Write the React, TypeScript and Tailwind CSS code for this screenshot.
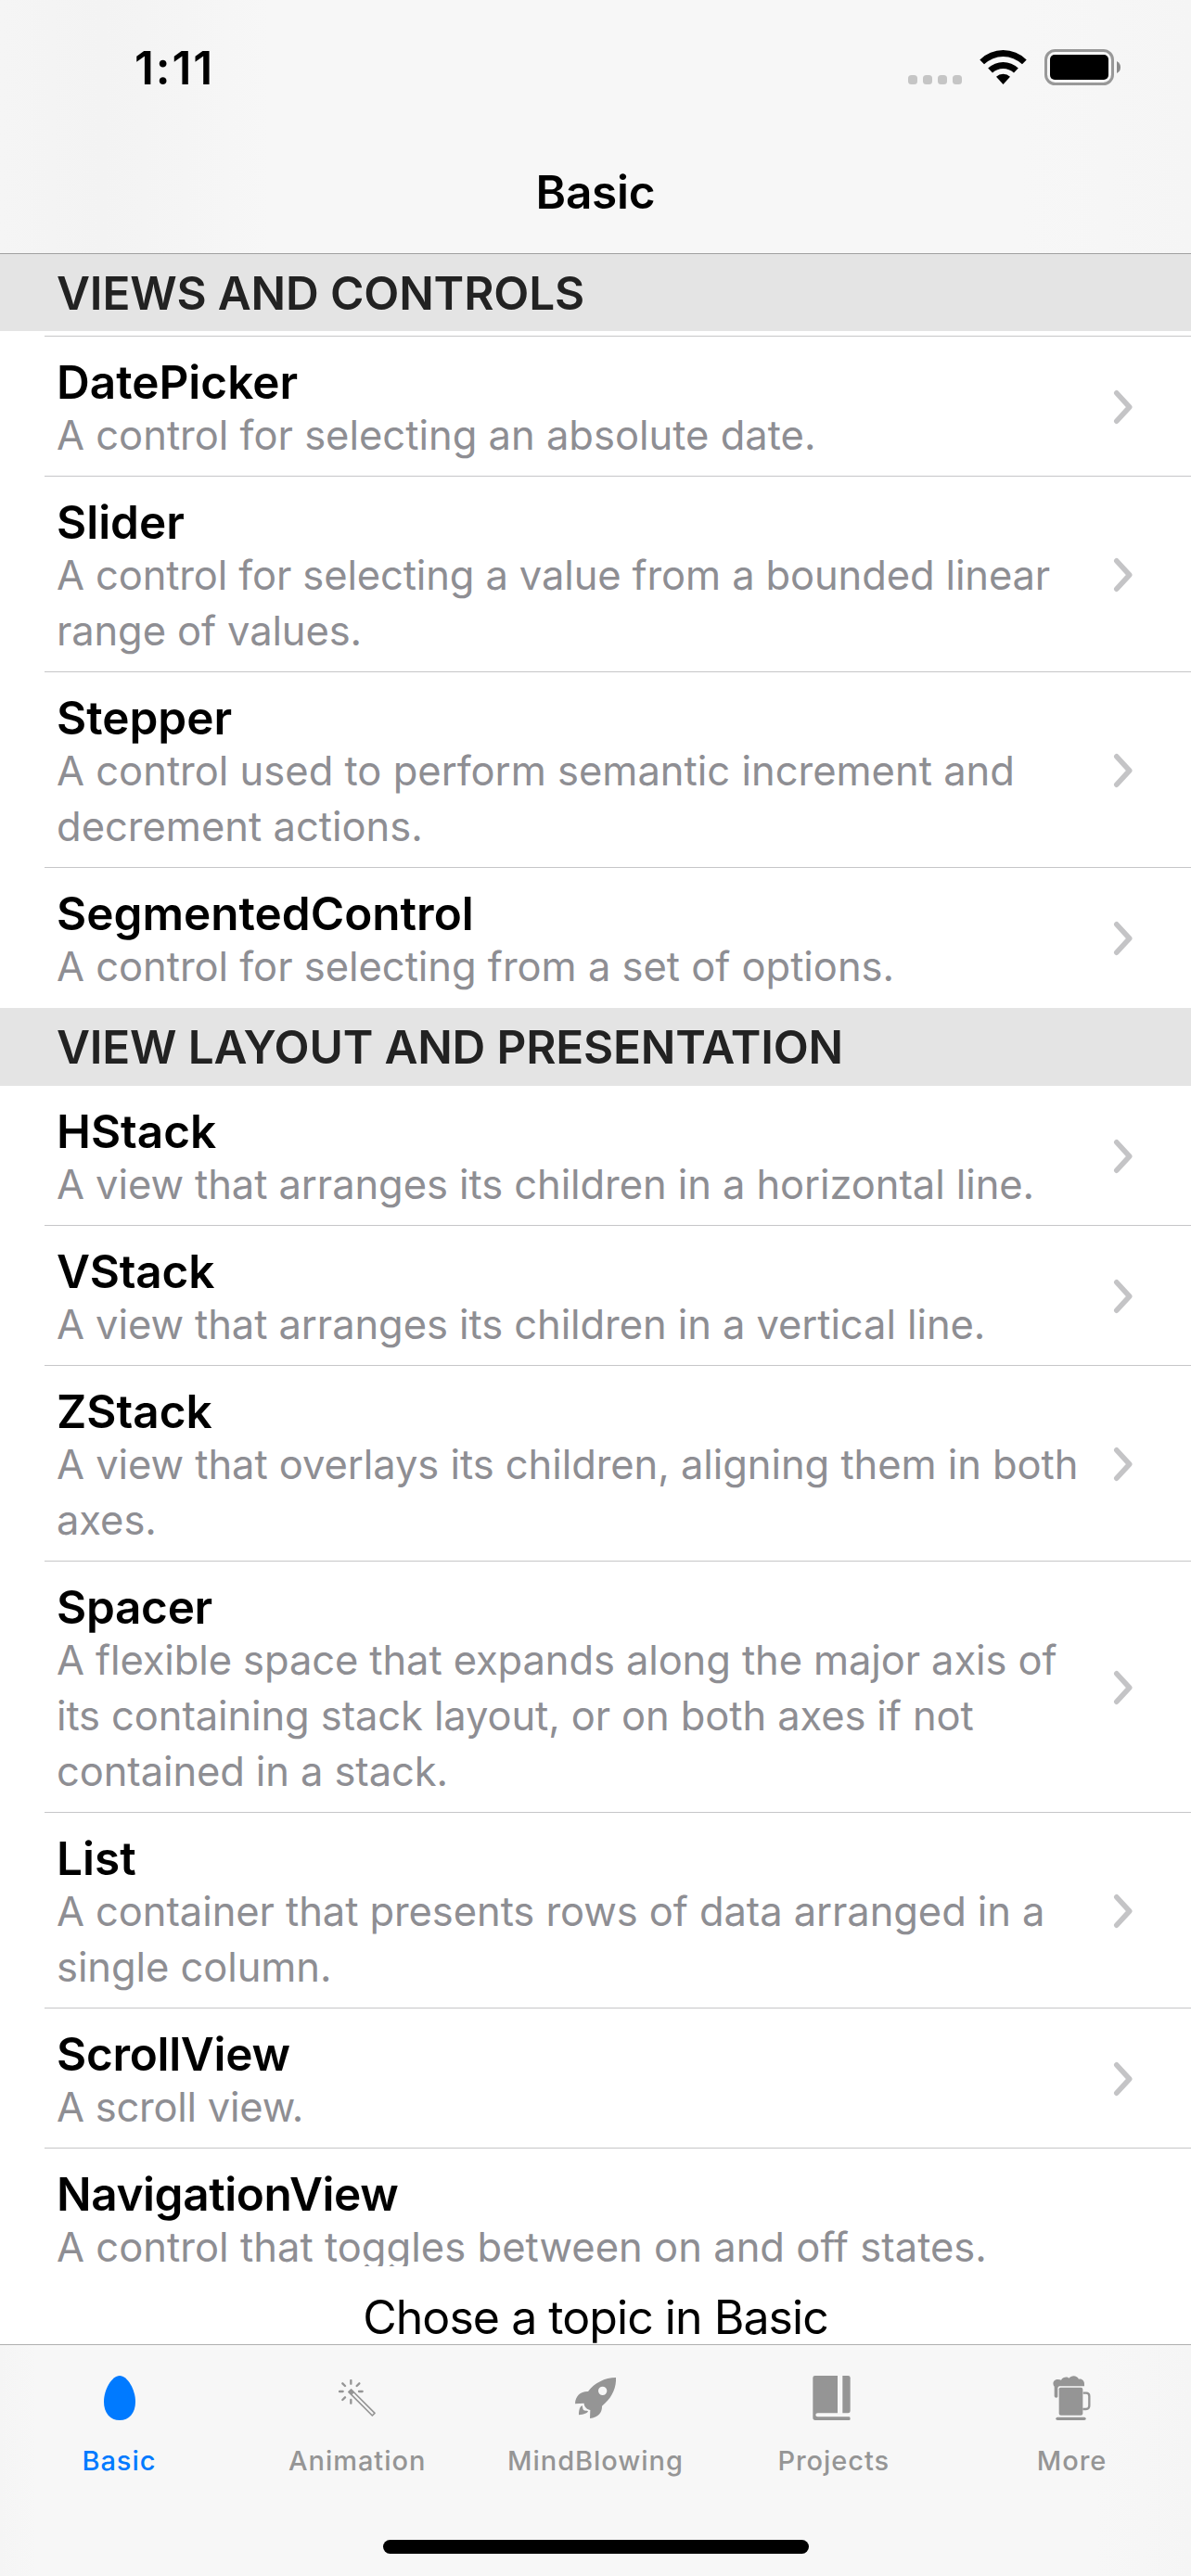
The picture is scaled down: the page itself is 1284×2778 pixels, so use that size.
import React from "react";

type Topic = { title: string; lines: string[]; titleTracking?: string; textTracking?: string };

const controls: Topic[] = [
  { title: "DatePicker", lines: ["A control for selecting an absolute date."] },
  {
    title: "Slider",
    lines: ["A control for selecting a value from a bounded linear", "range of values."],
    textTracking: "tracking-[-0.13px]",
  },
  { title: "Stepper", lines: ["A control used to perform semantic increment and", "decrement actions."] },
  {
    title: "SegmentedControl",
    lines: ["A control for selecting from a set of options."],
    textTracking: "tracking-[-0.03px]",
  },
];

const layouts: Topic[] = [
  {
    title: "HStack",
    lines: ["A view that arranges its children in a horizontal line."],
    textTracking: "tracking-[-0.08px]",
  },
  {
    title: "VStack",
    lines: ["A view that arranges its children in a vertical line."],
    titleTracking: "tracking-[-0.2px]",
    textTracking: "tracking-[-0.08px]",
  },
  {
    title: "ZStack",
    lines: ["A view that overlays its children, aligning them in both", "axes."],
    textTracking: "tracking-[-0.06px]",
  },
  {
    title: "Spacer",
    lines: [
      "A flexible space that expands along the major axis of",
      "its containing stack layout, or on both axes if not",
      "contained in a stack.",
    ],
    titleTracking: "tracking-[-0.3px]",
    textTracking: "tracking-[-0.11px]",
  },
  {
    title: "List",
    lines: ["A container that presents rows of data arranged in a", "single column."],
    textTracking: "tracking-[-0.08px]",
  },
  {
    title: "ScrollView",
    lines: ["A scroll view."],
    titleTracking: "tracking-[-0.3px]",
    textTracking: "tracking-[-0.25px]",
  },
  {
    title: "NavigationView",
    lines: ["A control that toggles between on and off states."],
    titleTracking: "tracking-[-0.4px]",
    textTracking: "tracking-[0.03px]",
  },
];

function StatusBar() {
  return (
    <div className="flex h-[141px] items-start justify-between pl-[145px] pr-[75px] pt-[43px]">
      <span className="text-[49.5px] font-semibold leading-[60px] tracking-[1.9px]">1:11</span>
      <div className="flex items-start pt-[10px]">
        <div className="mr-[19px] mt-[28px] flex gap-[6px]">
          {[0, 1, 2, 3].map((i) => (
            <span key={i} className="size-[10px] rounded-[3.5px] bg-[#c5c5c5]" />
          ))}
        </div>
        <svg className="mr-[19px] mt-px h-[37px] w-[51px]" viewBox="0 0 51 37">
          <path d="M0.3 10.4A36 36 0 0 1 50.7 10.4L46 15.3A29.5 29.5 0 0 0 5 15.3Z" />
          <path d="M9.2 19.6A23.5 23.5 0 0 1 41.8 19.6L37 24.6A16.6 16.6 0 0 0 14 24.6Z" />
          <path d="M18 28.8A11 11 0 0 1 33 28.8L25.5 37Z" />
        </svg>
        <svg className="h-[39px] w-[83px]" viewBox="0 0 83 39">
          <rect x="1.5" y="1.5" width="72" height="36" rx="10" fill="none" stroke="#989898" strokeWidth="3" />
          <rect x="6" y="6" width="63" height="27" rx="5" />
          <path d="M78 13Q82 15 82 19.5Q82 24 78 26Z" fill="#8a8a8a" />
        </svg>
      </div>
    </div>
  );
}

function Row({ topic, last, plain }: { topic: Topic; last?: boolean; plain?: boolean }) {
  return (
    <li className="shrink-0 pl-[48px]">
      <div
        className={
          last
            ? "flex items-center justify-between pb-[15px] pl-[13px] pr-[59px] pt-[19px]"
            : "flex items-center justify-between border-b border-[#c6c6c8] pb-[14px] pl-[13px] pr-[59px] pt-[19px]"
        }
      >
        <div className="whitespace-nowrap">
          <h3 className={`text-[49.5px] font-semibold leading-[61px] text-black ${topic.titleTracking ?? "tracking-normal"}`}>
            {topic.title}
          </h3>
          <p className={`-mt-[4px] text-[43.5px] leading-[60px] text-[#8e8e93] ${topic.textTracking ?? "tracking-normal"}`}>
            {topic.lines.map((line) => (
              <span key={line} className="block">
                {line}
              </span>
            ))}
          </p>
        </div>
        {!plain && (
          <svg className="mb-[4px] h-[38px] w-[26px] shrink-0" viewBox="0 0 26 38" fill="none">
            <path d="M4.8 3.8L18.7 19L4.8 34.2" stroke="#c4c4c6" strokeWidth="5.6" strokeLinecap="round" strokeLinejoin="round" />
          </svg>
        )}
      </div>
    </li>
  );
}

const icons = {
  egg: (
    <svg className="ml-px h-[48px] w-[34px]" viewBox="0 0 34 48" fill="currentColor">
      <path d="M17 0C25.5 0 34 15 34 28C34 40.5 27 48 17 48S0 40.5 0 28C0 15 8.5 0 17 0Z" />
    </svg>
  ),
  wand: (
    <svg className="h-[40px] w-[40px]" viewBox="0 0 120 120" fill="none" stroke="currentColor">
      <path d="M40 3V14M40 66V77M3 39H14M66 39H77M13 13L21 21M67 13L59 21M13 66L21 58" strokeWidth="7" strokeLinecap="round" />
      <path d="M41 33L117 109L109 117L33 41Z" strokeWidth="5" strokeLinejoin="round" />
      <path d="M40 31L51 42L42 51L31 40Z" fill="currentColor" stroke="none" />
    </svg>
  ),
  rocket: (
    <svg className="h-[44px] w-[44px]" viewBox="0 0 132 132" fill="currentColor">
      <path
        fillRule="evenodd"
        d="M132 0C134 34 118 68 87 92C88 112 76 129 48 132L49 105C40 105 28 94 29 83L0 85C1 59 18 44 42 45C62 18 96 0 132 0ZM89 29A14 14 0 1 0 89 57A14 14 0 1 0 89 29Z"
      />
      <path d="M23 91C25 96 24 101 27 105C31 108 37 106 42 109C40 116 30 119 12 121C12 106 15 94 23 91Z" />
    </svg>
  ),
  book: (
    <svg className="mr-[4px] h-[48px] w-[41px]" viewBox="0 0 123 144" fill="currentColor">
      <path d="M8 0H81V121H17Q10 121 10 127Q10 133 17 133H118Q122 133 122 138.500T118 144H9Q1 144 1 136V7Q1 0 8 0Z" />
      <path d="M97 0H115Q122 0 122 7V114Q122 121 115 121H97Z" />
    </svg>
  ),
  beer: (
    <svg className="mr-px h-[48px] w-[41px]" viewBox="0 0 123 144" fill="currentColor">
      <path d="M102 34H21Q17 35 16 40V68Q15 71 11 71Q5 71 5 66V35C-3 26 2 12 17 12Q23 12 27 14C32 4 47 2 52 8C60-3 79-2 84 11C95 9 102 17 102 27Z" />
      <path d="M20 43Q20 38 25 38H91Q97 38 97 44V122Q97 128 91 128H26Q20 128 20 122Z" />
      <path d="M98 56H108Q118 56 118 66V97Q118 108 108 108H97" fill="none" stroke="currentColor" strokeWidth="7" />
      <rect x="10" y="134" width="97" height="10" rx="5" />
    </svg>
  ),
};

const tabs = [
  { label: "Basic", icon: icons.egg, active: true },
  { label: "Animation", icon: icons.wand },
  { label: "MindBlowing", icon: icons.rocket },
  { label: "Projects", icon: icons.book },
  { label: "More", icon: icons.beer },
];

export default function App() {
  return (
    <div className="flex h-[2778px] w-[1284px] flex-col overflow-hidden bg-white font-['Inter',sans-serif] text-black">
      <header className="h-[274px] shrink-0 border-b border-[#a0a0a0] bg-[linear-gradient(90deg,#f5f5f5_0px,#f3f3f3_110px,#f7f7f7_290px,#f7f7f7_1100px,#f5f5f5_1284px)]">
        <StatusBar />
        <h1 className="pt-[36px] text-center text-[49.5px] font-semibold leading-[61px] tracking-[-0.2px]">Basic</h1>
      </header>

      <main className="flex h-[2170px] shrink-0 flex-col overflow-hidden">
        <h2 className="h-[83px] shrink-0 bg-[#e4e4e4] pl-[61px] pt-px text-[49.5px] font-semibold leading-[83px] tracking-[-0.15px] text-[#222]">
          VIEWS AND CONTROLS
        </h2>
        <div className="ml-[48px] h-[6px] shrink-0 border-b border-[#c6c6c8]" />
        <ul className="shrink-0">
          {controls.map((topic, i) => (
            <Row key={topic.title} topic={topic} last={i === controls.length - 1} />
          ))}
        </ul>
        <h2 className="h-[84px] shrink-0 bg-[#e4e4e4] pl-[61px] pt-px text-[49.5px] font-semibold leading-[83px] tracking-[-0.2px] text-[#222]">
          VIEW LAYOUT AND PRESENTATION
        </h2>
        <ul className="shrink-0">
          {layouts.map((topic, i) => (
            <Row key={topic.title} topic={topic} last={i === layouts.length - 1} plain={i === layouts.length - 1} />
          ))}
        </ul>
      </main>

      <p className="h-[84px] shrink-0 overflow-hidden pt-[25px] text-center text-[50px] leading-[61px] tracking-[-0.95px]">
        Chose a topic in Basic
      </p>

      <footer className="flex h-[250px] shrink-0 flex-col items-center border-t border-[#b0b0b0] bg-[linear-gradient(90deg,#f5f5f5_0px,#f7f7f7_40px,#f7f7f7_1180px,#f5f5f5_1284px)]">
        <nav className="grid h-[210px] w-full grid-cols-5 pt-[33px]">
          {tabs.map((tab) => (
            <a
              key={tab.label}
              className={tab.active ? "flex flex-col items-center text-[#007aff]" : "flex flex-col items-center text-[#959595]"}
            >
              <span className="flex h-[48px] items-center">{tab.icon}</span>
              <span className="mt-[26px] text-[29px] font-medium leading-[36px] tracking-[0.95px]">{tab.label}</span>
            </a>
          ))}
        </nav>
        <div className="ml-px h-[15px] w-[459px] rounded-full bg-black" />
      </footer>
    </div>
  );
}
